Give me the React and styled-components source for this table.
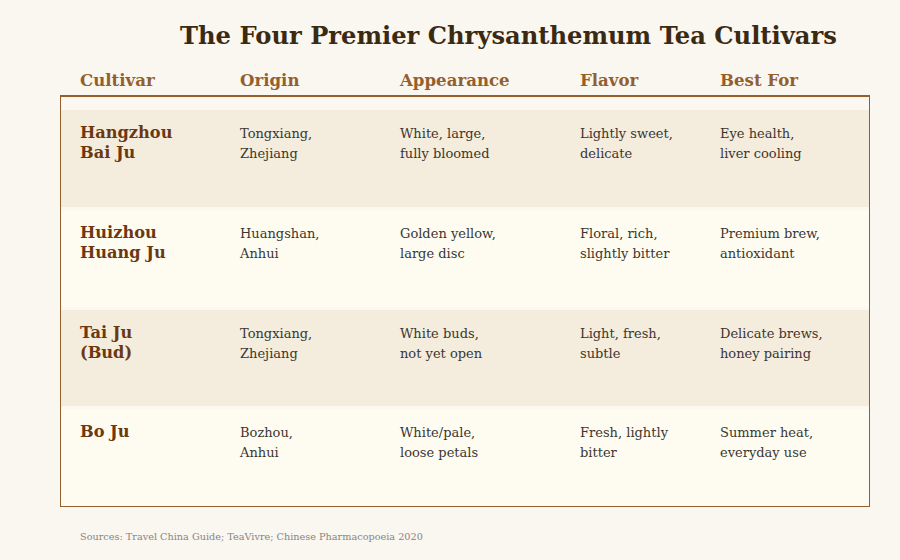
import React from 'react';
import styled, { createGlobalStyle } from 'styled-components';

const GlobalStyle = createGlobalStyle`
  html, body {
    margin: 0;
    padding: 0;
    background: #faf6f0;
  }
  body {
    font-family: "DejaVu Serif", "Liberation Serif", serif;
  }
`;

const columns = ['Cultivar', 'Origin', 'Appearance', 'Flavor', 'Best For'];

const cultivars = [
  {
    name: ['Hangzhou', 'Bai Ju'],
    origin: ['Tongxiang,', 'Zhejiang'],
    look: ['White, large,', 'fully bloomed'],
    flavor: ['Lightly sweet,', 'delicate'],
    best: ['Eye health,', 'liver cooling'],
  },
  {
    name: ['Huizhou', 'Huang Ju'],
    origin: ['Huangshan,', 'Anhui'],
    look: ['Golden yellow,', 'large disc'],
    flavor: ['Floral, rich,', 'slightly bitter'],
    best: ['Premium brew,', 'antioxidant'],
  },
  {
    name: ['Tai Ju', '(Bud)'],
    origin: ['Tongxiang,', 'Zhejiang'],
    look: ['White buds,', 'not yet open'],
    flavor: ['Light, fresh,', 'subtle'],
    best: ['Delicate brews,', 'honey pairing'],
  },
  {
    name: ['Bo Ju'],
    origin: ['Bozhou,', 'Anhui'],
    look: ['White/pale,', 'loose petals'],
    flavor: ['Fresh, lightly', 'bitter'],
    best: ['Summer heat,', 'everyday use'],
  },
];

export default function App() {
  return (
    <>
      <GlobalStyle />
      <Page>
        <Title>The Four Premier Chrysanthemum Tea Cultivars</Title>
        <HeaderRow>
          {columns.map((c) => (
            <HeadCell key={c}>{c}</HeadCell>
          ))}
        </HeaderRow>
        <TableBox>
          {cultivars.map((row, i) => (
            <Row key={i} $shade={i % 2 === 0}>
              <NameCell>
                {row.name.map((l) => <div key={l}>{l}</div>)}
              </NameCell>
              {[row.origin, row.look, row.flavor, row.best].map((lines, j) => (
                <Cell key={j}>
                  {lines.map((l) => <div key={l}>{l}</div>)}
                </Cell>
              ))}
            </Row>
          ))}
        </TableBox>
        <Sources>Sources: Travel China Guide; TeaVivre; Chinese Pharmacopoeia 2020</Sources>
      </Page>
    </>
  );
}

const Page = styled.div`
  width: 900px;
  height: 560px;
  box-sizing: border-box;
  padding: 18px 30px 0 60px;
  overflow: hidden;
`;

const Title = styled.h1`
  margin: 0 0 0 120px;
  font-size: 24.2px;
  line-height: 36px;
  font-weight: 700;
  color: #3a2a12;
`;

const grid = `
  display: grid;
  grid-template-columns: 160px 160px 180px 140px 1fr;
`;

const HeaderRow = styled.div`
  ${grid}
  padding-left: 20px;
  margin-top: 14px;
  height: 27px;
`;

const HeadCell = styled.div`
  font-size: 16.6px;
  font-weight: 700;
  line-height: 24px;
  color: #93602d;
`;

const TableBox = styled.div`
  display: flex;
  flex-direction: column;
  gap: 3px;
  height: 412px;
  box-sizing: border-box;
  padding-top: 13px;
  border: 1px solid #93602d;
  border-top-width: 2px;
  background: #fcf8f1;
`;

const Row = styled.div`
  ${grid}
  flex: 1;
  padding-left: 19px;
  padding-top: 13px;
  background: ${(p) => (p.$shade ? '#f4ecdc' : '#fefcf1')};
`;

const NameCell = styled.div`
  font-size: 16.2px;
  font-weight: 700;
  line-height: 20px;
  color: #6b3812;
`;

const Cell = styled.div`
  font-size: 13px;
  line-height: 20px;
  padding-top: 1px;
  color: #3b3631;
`;

const Sources = styled.div`
  margin: 24px 0 0 20px;
  font-size: 9.7px;
  color: #8a847d;
`;
